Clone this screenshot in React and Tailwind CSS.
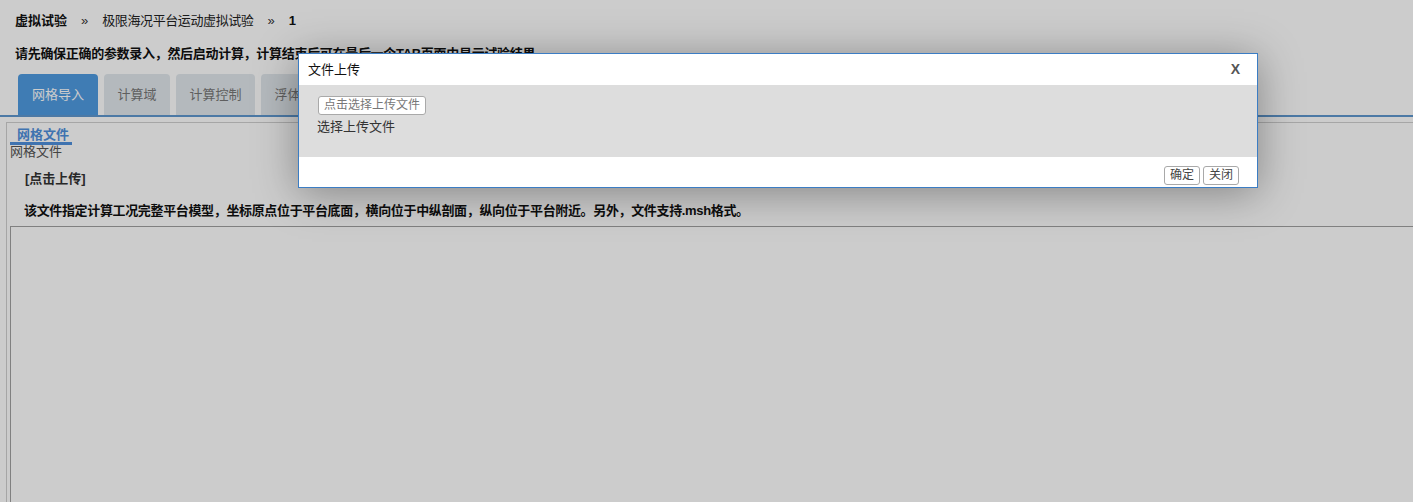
export default function App() {
  const tabs = ['网格导入', '计算域', '计算控制', '浮体参数'];

  return (
    <div className="relative min-h-screen bg-white text-[13px] text-[#111] overflow-hidden" style={{ fontFamily: '"Liberation Sans", "Noto Sans CJK SC", sans-serif' }}>
      {/* page under the overlay */}
      <div className="pl-[15px] pt-[11px] h-[30px] flex items-center gap-[14px] leading-[18px]">
        <span className="font-bold">虚拟试验</span>
        <span className="text-[#333]">»</span>
        <span className="text-[#222] tracking-[-0.4px]">极限海况平台运动虚拟试验</span>
        <span className="text-[#333]">»</span>
        <span className="font-bold">1</span>
      </div>
      <div className="pl-[15px] mt-[15px] leading-[18px] font-bold tracking-[-0.3px]">
        请先确保正确的参数录入，然后启动计算，计算结束后可在最后一个TAB页面中显示试验结果
      </div>
      <div className="flex gap-[6px] pl-[18px] mt-[11px] h-[41px]">
        {tabs.map((t, i) => (
          <div
            key={t}
            className={
              i === 0
                ? 'w-[80px] flex items-center justify-center rounded-t-[4px] bg-[#4f9ce2] text-white'
                : i === 1
                ? 'w-[66px] flex items-center justify-center rounded-t-[4px] bg-[#e2e8ed] text-[#777]'
                : 'w-[79px] flex items-center justify-center rounded-t-[4px] bg-[#e2e8ed] text-[#777]'
            }
          >
            {t}
          </div>
        ))}
      </div>
      <div className="h-[2px] bg-[#6098cf]" />
      <div className="ml-[6px] mt-[5px] border-l border-t border-[#d0d0d0] pl-[3px] pt-[4px]">
        <div className="leading-[16px]">
          <span className="inline-block text-[#4f90dc] font-bold border-b-[3px] border-[#4f90dc] leading-[14px] pl-[7px] pr-[3px]">网格文件</span>
        </div>
        <div className="text-[#555] leading-[16px] -mt-[1px]">网格文件</div>
        <div className="pl-[15px] mt-[10px] font-bold text-[#333] leading-[18px]">[点击上传]</div>
        <div className="pl-[14px] mt-[14px] font-bold leading-[18px] tracking-[-0.35px]">该文件指定计算工况完整平台模型，坐标原点位于平台底面，横向位于中纵剖面，纵向位于平台附近。另外，文件支持.msh格式。</div>
        <div className="mt-[6px] h-[300px] border-l border-t border-[#a0a0a0]" />
      </div>

      {/* modal overlay */}
      <div className="absolute inset-0 bg-black/20" />

      {/* dialog */}
      <div className="absolute left-[298px] top-[53px] w-[960px] border border-[#3b7dc4] bg-white shadow-[0_5px_40px_rgba(0,0,0,0.35)]">
        <div className="h-[31px] flex items-center justify-between pl-[9px] pr-[17px]">
          <span className="text-[#111]">文件上传</span>
          <span className="font-bold text-[#555] text-[14px]">X</span>
        </div>
        <div className="h-[72px] bg-[#dddddd] pl-[19px] pt-[10px]">
          <button className="h-[19px] px-[5px] border border-[#a9a9a9] rounded-[3px] bg-white text-[12px] text-[#777] leading-[17px]">点击选择上传文件</button>
          <div className="mt-[3px] -ml-[1px] text-[#333] leading-[18px]">选择上传文件</div>
        </div>
        <div className="h-[30px] flex items-center justify-end gap-[3px] pr-[18px] pt-[6px]">
          <button className="h-[19px] px-[5px] border border-[#a9a9a9] rounded-[3px] bg-white text-[12px] text-[#444] leading-[17px]">确定</button>
          <button className="h-[19px] px-[5px] border border-[#a9a9a9] rounded-[3px] bg-white text-[12px] text-[#444] leading-[17px]">关闭</button>
        </div>
      </div>
    </div>
  );
}
